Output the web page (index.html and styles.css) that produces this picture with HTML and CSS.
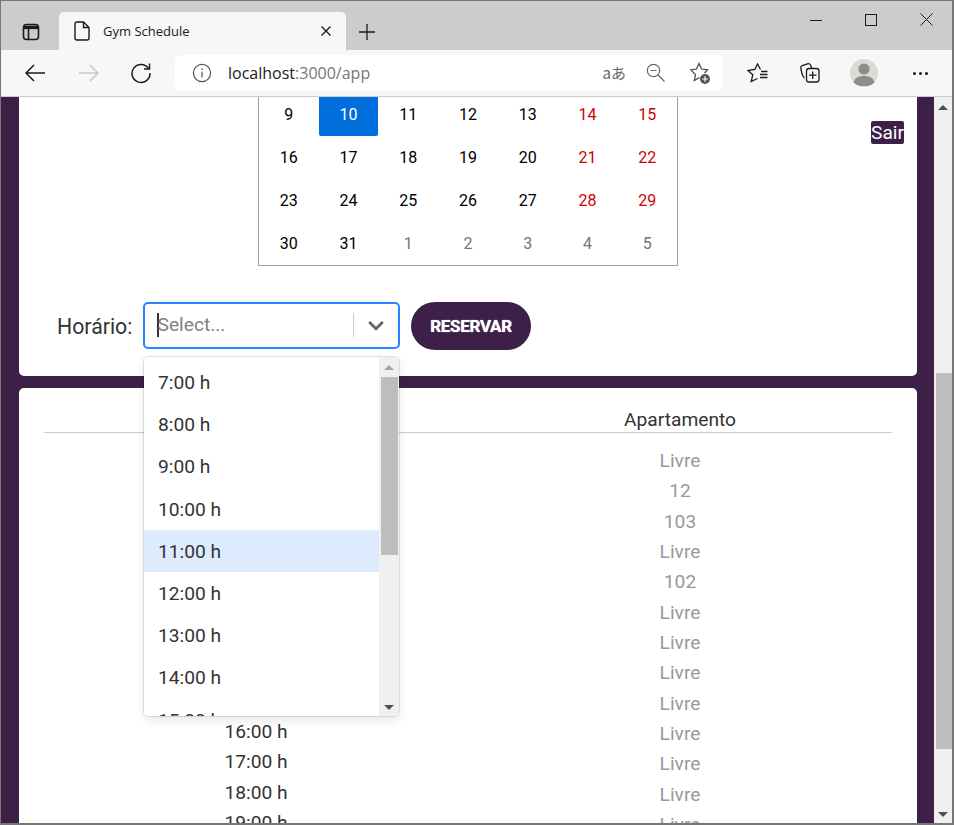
FILE: index.html
```html
<!DOCTYPE html>
<html lang="en">
<head>
    <meta charset="UTF-8">
    <meta name="viewport" content="width=device-width, initial-scale=1.0">
    <title>Gym Schedule</title>
    <link rel="stylesheet" href="styles.css">
</head>
<body>
<div class="window">
    <div class="tabstrip">
        <svg class="tab-actions" width="18" height="18" viewBox="0 0 18 18" fill="none" stroke="#1a1a1a" stroke-width="1.6"><rect x="1.5" y="1.5" width="15" height="15" rx="3"/><path d="M2 4.4H16" stroke-width="3.4"/><path d="M6.5 5.5V16"/></svg>
        <div class="tab">
            <svg width="16" height="20" viewBox="0 0 16 20" fill="none" stroke="#1a1a1a" stroke-width="1.4"><path d="M2.8 1H9.5L15 6.5V17.2a1.8 1.8 0 0 1-1.8 1.8H2.8A1.8 1.8 0 0 1 1 17.2V2.8A1.8 1.8 0 0 1 2.8 1Z"/><path d="M9.5 1V6.5H15"/></svg>
            <span class="tab-title">Gym Schedule</span>
            <svg class="tab-close" width="12" height="12" viewBox="0 0 12 12" stroke="#1a1a1a" stroke-width="1.4"><path d="M1.5 1.5L10.5 10.5M10.5 1.5L1.5 10.5"/></svg>
        </div>
        <svg class="new-tab" width="18" height="18" viewBox="0 0 18 18" stroke="#1a1a1a" stroke-width="1.3"><path d="M9 1V17M1 9H17"/></svg>
        <div class="window-btns">
            <svg width="12" height="12" viewBox="0 0 12 12" stroke="#1a1a1a" stroke-width="1"><path d="M0 6.5H12"/></svg>
            <svg width="12" height="12" viewBox="0 0 12 12" fill="none" stroke="#1a1a1a" stroke-width="1"><rect x=".5" y=".5" width="11" height="11"/></svg>
            <svg width="13" height="13" viewBox="0 0 13 13" stroke="#1a1a1a" stroke-width="1"><path d="M.5 .5L12.5 12.5M12.5 .5L.5 12.5"/></svg>
        </div>
    </div>

    <div class="toolbar">
        <svg class="nav-icon nav-back" width="22" height="20" viewBox="0 0 22 20" fill="none" stroke="#1a1a1a" stroke-width="1.5"><path d="M21 10H2M10 2L2 10L10 18"/></svg>
        <svg class="nav-icon nav-forward" width="22" height="20" viewBox="0 0 22 20" fill="none" stroke="#c9c9c9" stroke-width="1.5"><path d="M1 10H20M12 2L20 10L12 18"/></svg>
        <svg class="nav-icon nav-reload" width="22" height="22" viewBox="0 0 22 22" fill="none" stroke="#1a1a1a" stroke-width="1.5"><path d="M18.5 6.5A9 9 0 1 0 20 11"/><path d="M19.5 1.5V7H14"/></svg>
        <div class="address">
            <svg width="20" height="20" viewBox="0 0 20 20" fill="none" stroke="#555" stroke-width="1.2"><circle cx="10" cy="10" r="8.6"/><path d="M10 8.8V14.5"/><path d="M10 5.4V6.8" stroke-width="1.5"/></svg>
            <span class="url">localhost<span class="url-rest">:3000/app</span></span>
            <span class="addr-right">
                <span class="read-aloud">aあ</span>
                <svg width="20" height="20" viewBox="0 0 20 20" fill="none" stroke="#666" stroke-width="1.2"><circle cx="7.5" cy="7.5" r="6.2"/><path d="M4.5 7.5H10.5M12 12L18.5 18.5"/></svg>
                <svg width="22" height="22" viewBox="0 0 22 22" fill="none" stroke="#444" stroke-width="1.2"><path d="M15.5 11L18.5 7.8L12.6 7L10 1.5L7.5 7L1.8 8L6.5 12.6L5.3 18.5L10.5 15.5"/><circle cx="16" cy="17" r="5" fill="#555" stroke="none"/><path d="M16 14.2V19.8M13.2 17H18.8" stroke="#fff"/></svg>
            </span>
        </div>
        <svg class="tool-icon" width="22" height="20" viewBox="0 0 22 20" fill="none" stroke="#1a1a1a" stroke-width="1.3"><path d="M13.5 6.5L10.5 1L7.8 6.5L1 7.5L5.8 11.7L4.2 18.5L10.5 15.5"/><path d="M14 8.5H20.5M13 11.5H20.5M13 14.5H20.5"/></svg>
        <svg class="tool-icon" width="22" height="22" viewBox="0 0 22 22" fill="none" stroke="#1a1a1a" stroke-width="1.3"><path d="M5.5 16C3.5 14.5 2.5 11 1.8 6.2C1.6 4.8 2.2 4 3.2 3.6L8.5 1.8C10 1.3 11 2 11.6 3L12.6 6"/><rect x="7.5" y="6.5" width="12.5" height="13.5" rx="2.5"/><path d="M13.7 9.5V17M10 13.2H17.5"/></svg>
        <div class="avatar"><svg width="26" height="26" viewBox="0 0 26 26" fill="#8f8b87"><circle cx="13" cy="9" r="5.6"/><path d="M2.5 23C3.5 17.5 8 16 13 16S22.5 17.5 23.5 23C20.5 25.5 17 26 13 26S5.5 25.5 2.5 23Z"/></svg></div>
        <span class="more"><i></i><i></i><i></i></span>
    </div>

    <div class="viewport">
        <div class="page">
            <section class="card card-top">
                <div class="cal-row">
                    <div class="calendar">
                        <span class="day">9</span><span class="day active">10</span><span class="day">11</span><span class="day">12</span><span class="day">13</span><span class="day weekend">14</span><span class="day weekend">15</span>
                        <span class="day">16</span><span class="day">17</span><span class="day">18</span><span class="day">19</span><span class="day">20</span><span class="day weekend">21</span><span class="day weekend">22</span>
                        <span class="day">23</span><span class="day">24</span><span class="day">25</span><span class="day">26</span><span class="day">27</span><span class="day weekend">28</span><span class="day weekend">29</span>
                        <span class="day">30</span><span class="day">31</span><span class="day other">1</span><span class="day other">2</span><span class="day other">3</span><span class="day other">4</span><span class="day other">5</span>
                    </div>
                    <button class="logout" type="button">Sair</button>
                </div>
                <div class="booking">
                    <label class="booking-label">Horário:</label>
                    <div class="select">
                        <span class="caret"></span><span class="placeholder">Select...</span>
                        <span class="select-sep"></span>
                        <svg class="chevron" width="20" height="20" viewBox="0 0 20 20" fill="#666"><path d="M4.2 6L10 11.8L15.8 6L17.8 8L10 15.8L2.2 8Z"/></svg>
                        <div class="menu">
                            <div class="menu-list">
                                <div class="option">7:00 h</div>
                                <div class="option">8:00 h</div>
                                <div class="option">9:00 h</div>
                                <div class="option">10:00 h</div>
                                <div class="option focused">11:00 h</div>
                                <div class="option">12:00 h</div>
                                <div class="option">13:00 h</div>
                                <div class="option">14:00 h</div>
                                <div class="option">15:00 h</div>
                            </div>
                            <div class="menu-scroll">
                                <span class="arrow-up small"></span>
                                <span class="menu-thumb"></span>
                                <span class="arrow-down small"></span>
                            </div>
                        </div>
                    </div>
                    <button class="reserve" type="button">RESERVAR</button>
                </div>
            </section>

            <section class="card card-table">
                <div class="table-head"><span>Horário</span><span>Apartamento</span></div>
                <div class="table-body">
                    <div class="hours">
                        <div>7:00 h</div><div>8:00 h</div><div>9:00 h</div><div>10:00 h</div><div>11:00 h</div><div>12:00 h</div><div>13:00 h</div><div>14:00 h</div><div>15:00 h</div><div>16:00 h</div><div>17:00 h</div><div>18:00 h</div><div>19:00 h</div>
                    </div>
                    <div class="apts">
                        <div>Livre</div><div>12</div><div>103</div><div>Livre</div><div>102</div><div>Livre</div><div>Livre</div><div>Livre</div><div>Livre</div><div>Livre</div><div>Livre</div><div>Livre</div><div>Livre</div>
                    </div>
                </div>
            </section>
        </div>
        <div class="scrollbar">
            <span class="arrow-up"></span>
            <span class="scroll-track"><span class="scroll-thumb"></span></span>
            <span class="arrow-down"></span>
        </div>
    </div>
</div>
</body>
</html>
```

FILE: styles.css
```css
* { box-sizing: border-box; }
html, body { margin: 0; height: 100%; overflow: hidden; }
body { font-family: Roboto, sans-serif; background: #fff; }

.window { width: 954px; height: 825px; display: flex; flex-direction: column; border: 1px solid #777; border-width: 1px 2px 2px 1px; overflow: hidden; }

/* browser chrome */
.tabstrip { height: 49px; flex: none; display: flex; align-items: flex-end; background: #ccc; }
.tab-actions { margin: 0 0 9px 21px; }
.tab { width: 287px; height: 38px; margin-left: 19px; padding: 0 0 0 15px; display: flex; align-items: center; background: #f7f7f7; border-radius: 5px 5px 0 0; }
.tab-title { margin-left: 13px; font: 13px "Open Sans", sans-serif; color: #1a1a1a; flex: 1; }
.tab-close { margin-right: 14px; }
.new-tab { margin: 0 0 9px 12px; }
.window-btns { margin-left: auto; align-self: flex-start; display: flex; align-items: center; gap: 43px; padding: 12px 19px 0 0; }

.toolbar { height: 47px; flex: none; display: flex; align-items: center; background: #f7f7f7; border-bottom: 1px solid #ccc; position: relative; }
.nav-back { margin-left: 23px; }
.nav-forward { margin-left: 32px; }
.nav-reload { margin-left: 30px; }
.address { width: 548px; height: 36px; margin-left: 23px; padding-left: 17px; display: flex; align-items: center; background: #fff; border-radius: 6px; margin-top: -1px; }
.url { margin-left: 16px; font: 16px "Open Sans", sans-serif; color: #1a1a1a; }
.url-rest { color: #777; }
.addr-right { margin-left: auto; display: flex; align-items: center; gap: 23px; padding-right: 12px; }
.read-aloud { font: 15px "Noto Sans CJK JP", sans-serif; color: #666; margin-right: -3px; }
.tool-icon { margin-left: 24px; }
.tool-icon + .tool-icon { margin-left: 30px; }
.avatar { width: 28px; height: 28px; margin-left: 29px; border-radius: 50%; background: #dcdad8; display: flex; align-items: center; justify-content: center; overflow: hidden; }
.more { margin-left: 35px; display: flex; gap: 3px; }
.more i { width: 3px; height: 3px; background: #1a1a1a; border-radius: 50%; }

/* page */
.viewport { flex: 1; min-height: 0; display: flex; overflow: hidden; background: #3c2047; }
.page { flex: 1; padding: 0 17px 0 18px; overflow: hidden; }
.card { background: #fff; border-radius: 5px; }
.card-top { height: 279px; border-radius: 0 0 5px 5px; padding-right: 13px; }
.card-table { margin-top: 12px; height: 460px; padding: 20px 25px 0; border-radius: 5px 5px 0 0; }

.cal-row { display: grid; grid-template-columns: 1fr 420px 1fr; padding-left: 13px; align-items: start; }
.calendar { grid-column: 2; width: 420px; margin-top: -4px; display: grid; grid-template-columns: repeat(7, 1fr); grid-auto-rows: 43px; border: 1px solid #a0a096; border-top: none; font-size: 16px; }
.day { display: flex; align-items: center; justify-content: center; color: #000; }
.active { background: #006edc; color: #fff; border-radius: 0 0 2px 2px; }
.weekend { color: #d10000; }
.other { color: #757575; }
.logout { justify-self: end; margin-top: 24px; width: 33px; height: 23px; padding: 0; border: none; border-radius: 2px; background: #3c2047; color: #fff; font: 19.2px Roboto, sans-serif; overflow: hidden; white-space: nowrap; }

.booking { display: flex; align-items: center; margin-top: 34px; padding-left: 38px; }
.booking-label { font-size: 21.3px; color: #333; width: 86px; padding-top: 2px; }
.select { position: relative; width: 257px; height: 47px; border: 2px solid #2684ff; border-radius: 5px; background: #fff; display: flex; align-items: center; padding-left: 12px; }
.caret { width: 1.5px; height: 24px; background: #333; }
.placeholder { font-size: 19.2px; color: #808080; flex: 1; margin: 0 0 2px -1px; }
.select-sep { width: 1px; height: 24px; background: #ccc; }
.chevron { margin: 0 12px; }
.reserve { margin-left: 11px; width: 120px; height: 48px; margin-top: 2px; border: none; border-radius: 24px; background: #3c2047; color: #fff; font: 700 17px Roboto, sans-serif; letter-spacing: -.3px; text-shadow: 0 0 1px #fff; }

.menu { position: absolute; z-index: 5; left: -1px; top: 53px; width: 255px; height: 359px; display: flex; background: #fff; border-radius: 4px; box-shadow: 0 0 0 1px rgba(0,0,0,.1), 0 4px 11px rgba(0,0,0,.1); overflow: hidden; }
.menu-list { flex: 1; padding-top: 5px; }
.option { height: 42.2px; padding-left: 14px; display: flex; align-items: center; font-size: 19.2px; color: #333; }
.focused { background: #deebff; }
.menu-scroll { width: 20px; display: flex; flex-direction: column; align-items: center; background: #f0f0f0; position: relative; }
.menu-thumb { position: absolute; top: 20px; left: 2px; width: 17px; height: 178px; background: #bdbdbd; }

/* table */
.table-head { display: grid; grid-template-columns: 1fr 1fr; text-align: center; font-size: 19.2px; color: #333; height: 25px; border-bottom: 1px solid #ccc; line-height: 24px; }
.table-body { display: grid; grid-template-columns: 1fr 1fr; text-align: center; font-size: 19.2px; }
.hours { color: #333; padding-top: 11px; }
.apts { color: #999; padding-top: 12.9px; }
.hours div, .apts div { height: 30.33px; line-height: 30.33px; }

/* scrollbar */
.scrollbar { width: 18px; flex: none; display: flex; flex-direction: column; align-items: center; background: #f0f0f0; position: relative; }
.scroll-track { flex: 1; width: 100%; position: relative; }
.scroll-thumb { position: absolute; top: 259px; left: 2px; width: 16px; height: 376px; background: #bdbdbd; }
.arrow-up, .arrow-down { width: 0; height: 0; border-left: 5px solid transparent; border-right: 5px solid transparent; margin: 6px 0; }
.arrow-up { border-bottom: 5px solid #505050; margin: 8px 0 4px; }
.arrow-down { border-top: 5px solid #505050; }
.small.arrow-up { border-bottom-color: #a3a3a3; }
.small.arrow-down { margin-top: auto; }
```
